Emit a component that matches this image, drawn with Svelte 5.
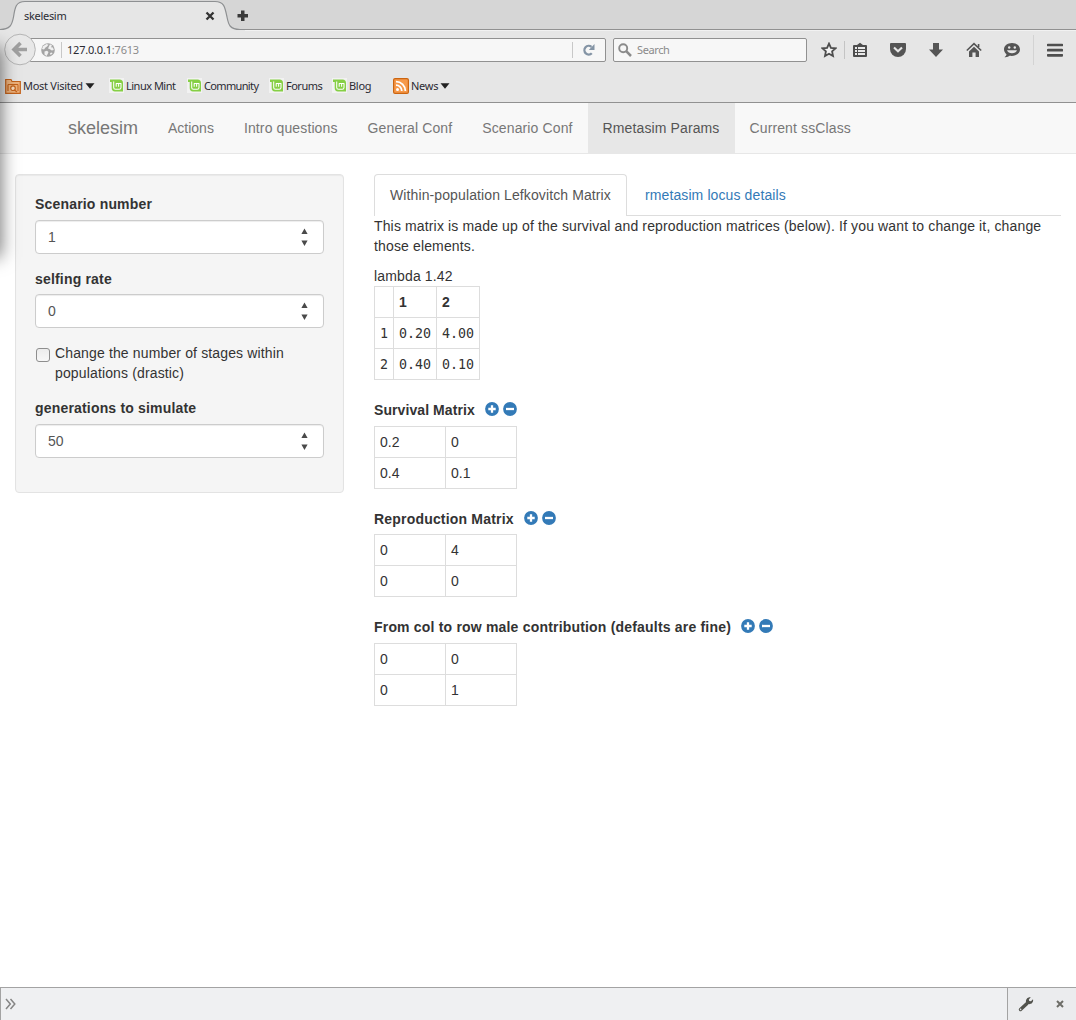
<script>
  const bookmarks = [
    { label: 'Linux Mint', cls: 'b-mint' },
    { label: 'Community', cls: 'b-comm' },
    { label: 'Forums', cls: 'b-forums' },
    { label: 'Blog', cls: 'b-blog' }
  ];
  const nav = ['Actions', 'Intro questions', 'General Conf', 'Scenario Conf', 'Rmetasim Params', 'Current ssClass'];
  const matrices = [
    { title: 'Survival Matrix', cls: 'm-surv', rows: [['0.2', '0'], ['0.4', '0.1']] },
    { title: 'Reproduction Matrix', cls: 'm-repr', rows: [['0', '4'], ['0', '0']] },
    { title: 'From col to row male contribution (defaults are fine)', cls: 'm-male', rows: [['0', '0'], ['0', '1']] }
  ];
</script>

{#snippet numberField(label, value, cls)}
  <div class="group {cls}">
    <div class="label">{label}</div>
    <div class="input">
      <span>{value}</span>
      <svg class="spin" width="7" height="19" viewBox="0 0 7 19"><path d="M3.5 0.5L6.6 6H.4zM3.5 18L6.6 12.5H.4z" fill="#4a4a4a" /></svg>
    </div>
  </div>
{/snippet}

<div class="window">
  <div class="edge-shadow"></div>
  <header class="chrome">
    <div class="tabstrip">
      <svg class="tabshape" width="245" height="31" viewBox="0 0 245 31">
        <path d="M0 31V29.5C10 29.5 12 25 13.500 17C15 7 16 1.500 25 1.500H215C224 1.500 225 7 227 17C228.500 25 230 29.500 240 29.500H245V31z" fill="#e6e6e6" />
        <path d="M0 29.500C10 29.500 12 25 13.500 17C15 7 16 1.500 25 1.500H215C224 1.500 225 7 227 17C228.500 25 230 29.500 240 29.500H245" fill="none" stroke="#8e9092" stroke-width="1.200" />
      </svg>
      <span class="tabtitle">skelesim</span>
      <svg class="tabclose" width="10" height="10" viewBox="0 0 10 10"><path d="M1.500 1.500l7 7M8.500 1.500l-7 7" stroke="#333" stroke-width="2.300" /></svg>
      <svg class="newtab" width="11" height="11" viewBox="0 0 11 11"><path d="M4 .5h3.500V4H11v3.500H7.500V11H4V7.500H.5V4H4z" fill="#3a3a3a" /></svg>
    </div>

    <div class="toolbar">
      <svg class="back" width="34" height="34" viewBox="0 0 34 34">
        <circle cx="16" cy="16.500" r="15.300" fill="#e8e8e8" stroke="#b5b5b5" />
        <path d="M16.500 10L10 16.500L16.500 23M10.500 16.500H23" fill="none" stroke="#a0a0a0" stroke-width="3.600" />
      </svg>
      <div class="urlbar">
        <svg class="globe" width="14" height="14" viewBox="0 0 14 14">
          <circle cx="7" cy="7" r="6.800" fill="#a4a4a4" />
          <path d="M2 3.200L5.500 1l2 .8L6 3.500L4.500 4.500L3 6.500L1 6zM9 1.200l2 1.300-1 1.700 2 .3.800 2.500-2 .5L8.500 6L7 5.500zM3.500 8.500l2.500-.7 1.500 1.200-.8 2L5.500 13L3.500 11.500zM9 10l2-.5.5 1L9.500 12z" fill="#f0f0f0" />
        </svg>
        <i class="sep"></i>
        <span class="url">127.0.0.1<em>:7613</em></span>
        <i class="sep"></i>
        <svg class="reload" width="12" height="12" viewBox="0 0 12 12"><path d="M8.800 9.200A4.300 4.300 0 1 1 8.500 2.900" fill="none" stroke="#8494a5" stroke-width="2.300" /><path d="M11.500 0v6H5.800z" fill="#8494a5" /></svg>
      </div>
      <div class="search">
        <svg width="14" height="14" viewBox="0 0 14 14"><circle cx="5.200" cy="5.200" r="4" fill="none" stroke="#8b8b8b" stroke-width="1.900" /><path d="M8.200 8.200L13 13" stroke="#8b8b8b" stroke-width="2.500" /></svg>
        <span>Search</span>
      </div>
      <div class="tools">
        <svg class="t" width="16" height="16" viewBox="0 0 16 16"><path d="M8 1.600L9.900 5.800L14.500 6.300L11.100 9.400L12 14L8 11.700L4 14L4.900 9.400L1.500 6.300L6.100 5.800z" fill="#f3f3f3" stroke="#4d4d4d" stroke-width="1.800" /></svg>
        <i class="toolsep"></i>
        <svg class="t" width="16" height="16" viewBox="0 0 16 16"><path d="M1 4a1 1 0 0 1 1-1h3L8 .8L11 3h3a1 1 0 0 1 1 1v10a1 1 0 0 1-1 1H2a1 1 0 0 1-1-1z" fill="#4d4d4d" /><path d="M3 5h2v2H3zM6 5h7v2H6zM3 8h2v2H3zM6 8h7v2H6zM3 11h2v2H3zM6 11h7v2H6z" fill="#e9e9e9" /></svg>
        <svg class="t" width="16" height="16" viewBox="0 0 16 16"><path d="M1 1h14a1 1 0 0 1 1 1v5a8 8 0 0 1-16 0V2a1 1 0 0 1 1-1z" fill="#545454" /><path d="M4 5.500L8 9.300L12 5.500" fill="none" stroke="#e6e6e6" stroke-width="2.100" /></svg>
        <svg class="t" width="16" height="16" viewBox="0 0 16 16"><path d="M5 1h6v6.500h4L8 15L1 7.500h4z" fill="#555" /></svg>
        <svg class="t" width="16" height="16" viewBox="0 0 16 16"><path d="M.8 8.500L8 1.700L15.200 8.500M12.600 2v3" fill="none" stroke="#555" stroke-width="1.600" /><path d="M8 4.700L13 9.500V15H9.600V10.500H6.400V15H3V9.500z" fill="#555" /></svg>
        <svg class="t" width="18" height="16" viewBox="0 0 18 16"><path d="M9 1C4.500 1 1 3.800 1 7.300C1 9.500 2 11 3.500 12.300C3.300 13.800 2.500 14.500 1.500 15.200C4 15.400 5.500 14.700 6.500 13.800C13 14.700 17 11.500 17 7.500C17 3.800 13.500 1 9 1z" fill="#555" /><circle cx="6.200" cy="5.500" r="1.200" fill="#e6e6e6" /><circle cx="11.800" cy="5.500" r="1.200" fill="#e6e6e6" /><path d="M4 8.300H14C13 12.300 5 12.300 4 8.300z" fill="#e6e6e6" /></svg>
        <i class="toolsep tall"></i>
        <svg class="t" width="16" height="16" viewBox="0 0 16 16"><path d="M1 3h14M1 8.200h14M1 13.300h14" stroke="#4f4f4f" stroke-width="2.700" stroke-linecap="round" /></svg>
      </div>
    </div>

    <div class="bookmarks">
      <svg class="bm-icon" width="16" height="16" viewBox="0 0 16 16">
        <path d="M.7 15.300V1.500H6l1 2h8.300v11.800z" fill="#eeb27c" stroke="#c4631b" stroke-width="1.200" />
        <path d="M3 6.500h10v6.500" fill="none" stroke="#c4631b" /><circle cx="8" cy="10.200" r="2.300" fill="#f8dcc0" stroke="#c4631b" stroke-width="1.200" /><path d="M9.500 12l2.500 2M3 6.500V13" stroke="#c4631b" stroke-width="1.200" />
      </svg>
      <span class="bm b-most">Most Visited</span>
      <svg class="caret" width="10" height="6" viewBox="0 0 10 6"><path d="M.5.3h9L5 5.800z" fill="#222" /></svg>
      {#each bookmarks as b}
        <span class="item {b.cls}">
          <svg width="15" height="15" viewBox="0 0 15 15">
            <rect width="15" height="15" fill="#f2f2f2" />
            <path d="M1 1.500H10.500A3.500 3.500 0 0 1 14 5V13.500H6A3.500 3.500 0 0 1 2.700 10V4H1z" fill="#86cf45" />
            <path d="M4.700 3.500V9.500A1.800 1.800 0 0 0 6.500 11.300H10.200A1.800 1.800 0 0 0 12 9.500V5.500H7.200V8.800M9.600 5.500V8.800" fill="none" stroke="#fff" stroke-width="1.050" stroke-linejoin="round" />
          </svg>
          <span class="bm">{b.label}</span>
        </span>
      {/each}
      <span class="item b-news">
        <svg width="16" height="16" viewBox="0 0 16 16"><rect x=".6" y=".6" width="14.800" height="14.800" rx="1.500" fill="#f6994a" stroke="#cc6510" stroke-width="1.200" /><circle cx="4.500" cy="11.600" r="1.500" fill="#fff" /><path d="M3 7.200A5.800 5.800 0 0 1 8.800 13M3 3.600A9.400 9.400 0 0 1 12.400 13" fill="none" stroke="#fff" stroke-width="1.800" /></svg>
        <span class="bm">News</span>
      </span>
      <svg class="caret" width="10" height="6" viewBox="0 0 10 6"><path d="M.5.3h9L5 5.800z" fill="#222" /></svg>
    </div>
  </header>

  <nav class="navbar">
    <span class="brand">skelesim</span>
    {#each nav as n}
      <span class="navitem" class:active={n === 'Rmetasim Params'} class:first={n === 'Actions'}>{n}</span>
    {/each}
  </nav>

  <main>
    <aside class="well">
      {@render numberField('Scenario number', '1', 'g-first')}
      {@render numberField('selfing rate', '0', '')}
      <div class="check"><i class="box"></i><span>Change the number of stages within<br />populations (drastic)</span></div>
      {@render numberField('generations to simulate', '50', 'g-gen')}
    </aside>

    <section class="content">
      <div class="tabs">
        <span class="tab on">Within-population Lefkovitch Matrix</span>
        <span class="tab">rmetasim locus details</span>
      </div>
      <p>This matrix is made up of the survival and reproduction matrices (below). If you want to change it, change<br />those elements.</p>
      <div class="lambda">lambda 1.42</div>
      <table class="lefk">
        <tbody>
          <tr><th></th><th>1</th><th>2</th></tr>
          <tr><td>1</td><td>0.20</td><td>4.00</td></tr>
          <tr><td>2</td><td>0.40</td><td>0.10</td></tr>
        </tbody>
      </table>
      {#each matrices as m}
        <div class="matrix {m.cls}">
          <div class="mtitle">
            <span>{m.title}</span>
            <svg width="14" height="14" viewBox="0 0 14 14"><circle cx="7" cy="7" r="6.900" fill="#337ab7" /><path d="M7 3.300v7.400M3.300 7h7.400" stroke="#fff" stroke-width="2.300" /></svg>
            <svg width="14" height="14" viewBox="0 0 14 14"><circle cx="7" cy="7" r="6.900" fill="#337ab7" /><path d="M3 7h8" stroke="#fff" stroke-width="2.300" /></svg>
          </div>
          <table>
            <tbody>
              {#each m.rows as r}
                <tr>{#each r as c}<td>{c}</td>{/each}</tr>
              {/each}
            </tbody>
          </table>
        </div>
      {/each}
    </section>
  </main>

  <footer>
    <svg class="chev" width="11" height="12" viewBox="0 0 11 12"><path d="M1 1l4.300 5L1 11M5.500 1l4.300 5l-4.300 5" fill="none" stroke="#858585" stroke-width="1.500" /></svg>
    <div class="devtools">
      <svg width="16" height="16" viewBox="0 0 16 16"><path d="M2.500 13.500L9 7.500" stroke="#51524c" stroke-width="3.400" stroke-linecap="round" /><path d="M12.800 1.200L10.800 3.400L11.300 5L13 5.300L15 3.200C15.800 6.500 13 8.700 10 8L8 6C7.500 3 9.800.7 12.800 1.200z" fill="#51524c" /><circle cx="2.600" cy="13.400" r=".8" fill="#ddd" /></svg>
      <svg width="8" height="8" viewBox="0 0 8 8"><path d="M1 1l6 6M7 1L1 7" stroke="#6d6d68" stroke-width="2" /></svg>
    </div>
  </footer>
</div>

<style>
  :global(body) { margin: 0; background: #fff; }
  .window { position: relative; display: flex; flex-direction: column; width: 1076px; height: 1020px; overflow: hidden; font: 14px/20px "Liberation Sans", Arial, sans-serif; color: #333; background: #fff; }
  svg { display: block; flex: none; }
  i, em { font-style: normal; }
  span { white-space: nowrap; }
  .edge-shadow { position: absolute; z-index: 5; left: -20px; top: 48px; width: 20px; height: 208px; box-shadow: 0 0 18px 1px rgba(0, 0, 0, .55); }

  .chrome { height: 102px; background: #e6e6e6; border-bottom: 1px solid #919191; font: 11px/16px "Noto Sans", sans-serif; color: #2b2b33; }
  .tabstrip { position: relative; height: 29px; background: #d6d6d6; border-bottom: 1px solid #919191; display: flex; align-items: center; }
  .tabshape { position: absolute; left: 0; top: 0; }
  .tabtitle { position: relative; margin-left: 24px; width: 181px; letter-spacing: -.3px; padding-top: 3px; }
  .tabclose { position: relative; top: 1px; }
  .newtab { position: relative; margin-left: 22px; top: 1px; }

  .toolbar { height: 39px; box-sizing: border-box; display: flex; align-items: center; border-top: 1px solid #f2f2f2; }
  .back { position: relative; z-index: 1; margin-left: 4px; }
  .urlbar { box-sizing: border-box; margin-left: -8px; width: 576px; height: 24px; display: flex; align-items: center; border: 1px solid #919191; border-radius: 0 2px 2px 0; background: #f7f7f7; padding-left: 10px; }
  .sep { width: 1px; height: 16px; background: #c8c8c8; margin-left: 6px; }
  .url { margin-left: 5px; flex: 1; letter-spacing: -.2px; }
  .url em { color: #8b8b8b; }
  .urlbar .sep:nth-of-type(2) { margin-left: 0; }
  .reload { margin: 0 10px 0 10px; }
  .search { box-sizing: border-box; margin-left: 7px; width: 194px; height: 24px; display: flex; align-items: center; gap: 5px; padding-left: 4px; border: 1px solid #919191; border-radius: 2px; background: #f7f7f7; color: #8a8a8a; letter-spacing: -.4px; }
  .tools { display: flex; align-items: center; margin-left: 14px; }
  .toolsep { width: 1px; height: 18px; background: #c4c4c4; margin: 0 7px; }
  .tools .t + .t { margin-left: 22px; }
  .tools .t:nth-of-type(6) { margin-left: 21px; }
  .toolsep.tall { height: 30px; margin: 0 13px 0 12px; background: #d3d3d3; }

  .bookmarks { height: 33px; display: flex; align-items: center; padding-left: 5px; letter-spacing: -.28px; }
  .bm-icon { margin-right: 2px; }
  .b-most { width: 60px; }
  .caret { margin-left: 2px; }
  .item { display: flex; align-items: center; gap: 2px; }
  .b-mint { margin-left: 14px; width: 78px; letter-spacing: -.5px; }
  .b-comm { width: 82px; letter-spacing: -.65px; }
  .b-forums { width: 63px; letter-spacing: -.5px; }
  .b-blog { width: 61px; }
  .b-news { width: 45px; }

  .navbar { height: 50px; display: flex; background: #f8f8f8; border-bottom: 1px solid #e7e7e7; line-height: 50px; color: #777; padding-left: 68px; }
  .brand { font-size: 18px; width: 85px; }
  .navitem { padding: 0 15px; letter-spacing: .12px; }
  .navitem.first { letter-spacing: 0; }
  .navitem.active { background: #e7e7e7; color: #555; }

  main { display: flex; flex: 1; padding: 20px 15px 0; }
  .well { box-sizing: border-box; width: 329px; height: 319px; padding: 19px; border: 1px solid #e3e3e3; border-radius: 4px; background: #f5f5f5; box-shadow: inset 0 1px 1px rgba(0, 0, 0, .05); }
  .group { margin-bottom: 15px; }
  .label { font-weight: 700; margin-bottom: 5px; letter-spacing: .18px; }
  .g-first .label, .g-gen .label { margin-bottom: 6px; }
  .input { box-sizing: border-box; height: 34px; display: flex; align-items: center; justify-content: space-between; padding: 0 15px 0 12px; border: 1px solid #ccc; border-radius: 4px; background: #fff; color: #555; box-shadow: inset 0 1px 1px rgba(0, 0, 0, .075); }
  .check { display: flex; margin-bottom: 15px; letter-spacing: .14px; }
  .box { box-sizing: border-box; width: 14px; height: 14px; margin: 5px 5px 0 1px; border: 1px solid #8e8e8e; border-radius: 3px; background: linear-gradient(#ececec, #f7f7f7); }

  .content { width: 687px; margin-left: 30px; }
  .tabs { display: flex; height: 41px; border-bottom: 1px solid #ddd; }
  .tab { padding: 10px 15px 0; border: 1px solid transparent; border-bottom: 0; height: 31px; margin-right: 2px; line-height: 20px; color: #337ab7; letter-spacing: .11px; }
  .tab.on { color: #555; background: #fff; border-color: #ddd; border-radius: 4px 4px 0 0; }
  p { margin: 0 0 10px; white-space: nowrap; letter-spacing: .143px; }
  .lambda { letter-spacing: .15px; }
  table { border-collapse: collapse; table-layout: fixed; width: 143px; }
  td, th { box-sizing: border-box; height: 31px; border: 1px solid #ddd; padding: 0 5px; text-align: left; line-height: 20px; }
  .lefk { width: 106px; }
  .lefk th:first-child { width: 19px; }
  .lefk td { font-family: "DejaVu Sans Mono", monospace; font-size: 13.300px; padding-top: 2px; }
  .matrix { height: 109px; }
  .lefk + .matrix { margin-top: 20px; }
  .mtitle { display: flex; align-items: center; height: 20px; margin-bottom: 6px; font-weight: 700; }
  .mtitle svg { margin: -2px 4px 0 0; }
  .mtitle span { margin-right: 10px; letter-spacing: .19px; }
  .m-surv .mtitle span { letter-spacing: .08px; }
  .m-repr .mtitle { margin-bottom: 5px; }
  .m-repr { height: 108px; }

  footer { height: 33px; box-sizing: border-box; display: flex; align-items: center; justify-content: space-between; padding-left: 4px; background: #eff0f2; border-top: 1px solid #a3a3a3; border-left: 1px solid #a3a3a3; }
  .devtools { box-sizing: border-box; width: 69px; height: 32px; display: flex; align-items: center; gap: 22px; padding-left: 10px; border-left: 1px solid #a3a3a3; background: #ebecee; }
</style>
